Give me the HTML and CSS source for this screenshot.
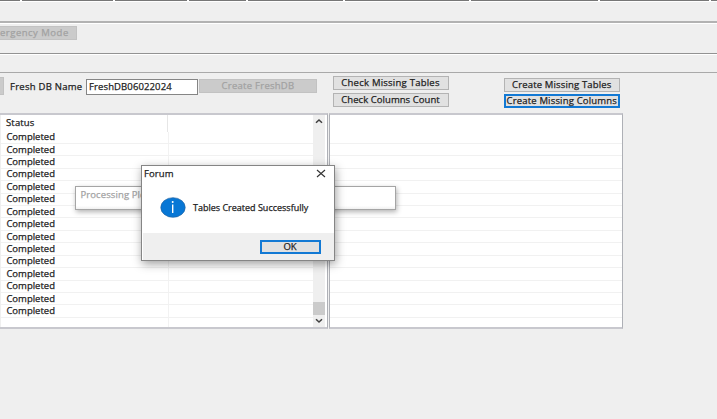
FILE: index.html
```
<!DOCTYPE html>
<html lang="en">
<head>
<meta charset="utf-8">
<title>Forum</title>
<link rel="stylesheet" href="styles.css">
</head>
<body>
<div class="window">
  <div class="tabs"><i></i><i></i><i></i><i></i><i></i><i></i><i></i><i></i><i></i></div>
  <div class="band band-menu"></div>
  <div class="band band-mode"><button class="btn disabled emergency"><span>ergency Mode</span></button></div>
  <div class="band band-empty"></div>
  <div class="toolbar">
    <button class="btn disabled stub"></button>
    <label class="name-label"><span>Fresh DB Name</span></label>
    <div class="field"><span>FreshDB06022024</span></div>
    <button class="btn disabled create-db"><span>Create FreshDB</span></button>
    <div class="stack checks">
      <button class="btn"><span class="t-ct">Check Missing Tables</span></button>
      <button class="btn"><span class="t-cc">Check Columns Count</span></button>
    </div>
    <div class="stack creates">
      <button class="btn"><span class="t-mt">Create Missing Tables</span></button>
      <button class="btn focused"><span class="t-mc">Create Missing Columns</span></button>
    </div>
  </div>
  <div class="panes">
    <div class="pane left">
      <div class="grid">
        <div class="head"><span>Status</span></div>
        <div class="rows">
          <div class="row"><span>Completed</span></div>
          <div class="row"><span>Completed</span></div>
          <div class="row"><span>Completed</span></div>
          <div class="row"><span>Completed</span></div>
          <div class="row"><span>Completed</span></div>
          <div class="row"><span>Completed</span></div>
          <div class="row"><span>Completed</span></div>
          <div class="row"><span>Completed</span></div>
          <div class="row"><span>Completed</span></div>
          <div class="row"><span>Completed</span></div>
          <div class="row"><span>Completed</span></div>
          <div class="row"><span>Completed</span></div>
          <div class="row"><span>Completed</span></div>
          <div class="row"><span>Completed</span></div>
          <div class="row"><span>Completed</span></div>
          <div class="row last"></div>
        </div>
      </div>
      <div class="scroll">
        <svg width="12" height="14" viewBox="0 0 12 14"><path d="M3 7.800 6 5l3 2.800"/></svg>
        <div class="thumb"></div>
        <svg width="12" height="12" viewBox="0 0 12 12"><path d="M3 4.200 6 7l3-2.800"/></svg>
      </div>
    </div>
    <div class="pane right">
      <div class="head"></div>
      <div class="rows">
        <div class="row"></div><div class="row"></div><div class="row"></div><div class="row"></div>
        <div class="row"></div><div class="row"></div><div class="row"></div><div class="row"></div>
        <div class="row"></div><div class="row"></div><div class="row"></div><div class="row"></div>
        <div class="row"></div><div class="row"></div><div class="row"></div><div class="row last"></div>
      </div>
    </div>
  </div>
</div>
<div class="processing"><span>Processing Please wait</span></div>
<div class="dialog">
  <div class="title"><span>Forum</span>
    <svg width="10" height="9" viewBox="0 0 10 9"><path d="M1 1l8 7M9 1 1 8"/></svg>
  </div>
  <div class="message">
    <svg width="26" height="21" viewBox="0 0 26 21"><ellipse cx="13" cy="10.500" rx="12.200" ry="9.800"/><path d="M12.700 7.500v8.500"/><circle cx="12.700" cy="4.900" r="1"/></svg>
    <span>Tables Created Successfully</span>
  </div>
  <div class="actions"><button class="btn focused"><span>OK</span></button></div>
</div>
</body>
</html>
```
FILE: styles.css
```
* { box-sizing: border-box; }
body {
  margin: 0;
  width: 717px;
  height: 419px;
  overflow: hidden;
  position: relative;
  background: #efefef;
  color: #222;
  font: 400 9.5px/12px "Open Sans", "Noto Sans", sans-serif;
}
span { display: inline-block; white-space: nowrap; -webkit-text-stroke: .25px currentColor; }
.tabs {
  display: grid;
  grid-template-columns: 20px 91px 72px 57px 95px 124px 127px 109px 1fr;
  gap: 2px;
  height: 2px;
  border-bottom: 1px solid #fff;
  background: #fff;
}
.tabs i { background: #777; }
.band { border-bottom: 1px solid #fff; }
.band-menu { height: 22px; box-shadow: inset 0 -2px #b2b2b2; }
.band-mode { height: 31px; padding-top: 2px; box-shadow: inset 0 -1px #929292; }
.band-empty { height: 18px; border-bottom: 0; box-shadow: inset 0 -1px #a9a9a9; }
.btn {
  display: flex;
  align-items: center;
  justify-content: center;
  height: 14px;
  padding: 0;
  border: 1px solid #b3b3b3;
  background: #e1e1e1;
  color: #222;
  font: inherit;
}
.btn.disabled { border-color: #c2c2c2; background: #cbcbcb; color: #a2a2a2; }
.btn.focused { border: 2px solid #1279d4; }
.emergency { width: 77px; justify-content: flex-start; border-left: 0; }
.emergency span { letter-spacing: .5px; }
.toolbar { display: flex; height: 40px; align-items: flex-start; }
.stub { width: 4px; height: 18px; margin-top: 4px; border-left: 0; }
.name-label { width: 82px; padding: 8px 0 0 6px; }
.name-label span { letter-spacing: .26px; }
.field {
  width: 112px;
  height: 16px;
  margin-top: 6px;
  padding: 1px 2px;
  border: 1px solid #858585;
  background: #fff;
}
.field span { letter-spacing: .12px; }
.create-db { width: 118px; margin: 6px 0 0 1px; }
.create-db span { letter-spacing: .26px; }
.stack { display: flex; flex-direction: column; gap: 3px; }
.checks { width: 116px; margin: 3px 0 0 15.5px; }
.creates { width: 116.5px; margin: 5px 0 0 55px; gap: 2px; }
.t-ct { letter-spacing: .24px; }
.t-cc { letter-spacing: .06px; }
.t-mt { letter-spacing: .16px; }
.t-mc { letter-spacing: .18px; }
.panes { display: flex; gap: 1px; height: 215.5px; }
.pane {
  border: 1px solid #aeb0b6;
  border-top: 2px solid #c8c8ce;
  border-bottom: 2px solid #c8c8ce;
  background: #fff;
  overflow: hidden;
}
.left { display: flex; width: 328px; border-left: 0; }
.right { width: 294px; }
.grid { width: 313px; border-left: 1px solid #efefef; }
.head { height: 16.5px; }
.grid .head { width: 167px; padding: 2px 0 0 5px; border-right: 1px solid #e6e6e6; }
.head span { letter-spacing: .15px; }
.row { height: 12.430px; border-bottom: 1px solid #f1f1f1; }
.row.last { border-bottom: 0; height: 11px; }
.grid .row { display: flex; align-items: center; padding-left: 5.4px; background: linear-gradient(#f2f2f2, #f2f2f2) 167px 0 / 1px 100% no-repeat; }
.scroll { display: flex; flex-direction: column; width: 12px; margin-left: 0; background: #efefef; }
.scroll svg { fill: none; stroke: #404040; stroke-width: 1.500; flex: none; }
.thumb { height: 13px; margin-top: auto; background: #cbcbcb; }
.processing {
  position: absolute;
  left: 75px;
  top: 186px;
  width: 321px;
  height: 24px;
  padding: 2px 4.500px;
  border: 1px solid #a5a5a5;
  background: linear-gradient(#fff 85%, #f0f0f0);
  box-shadow: 1px 2px 5px rgba(0, 0, 0, .3);
  color: #a3a3a3;
}
.processing span { letter-spacing: .1px; }
.dialog {
  position: absolute;
  left: 141px;
  top: 165px;
  width: 193.500px;
  height: 96px;
  border: 1px solid #858585;
  background: #fff;
  box-shadow: 1px 3px 9px rgba(0, 0, 0, .38);
  display: flex;
  flex-direction: column;
}
.title { display: flex; justify-content: space-between; height: 17px; padding: 2px 8px 0 2px; }
.title span { letter-spacing: .1px; }
.title svg { margin-top: 1px; fill: none; stroke: #333; stroke-width: 1.100; }
.message { display: flex; flex: 1; align-items: center; gap: 7px; padding: 0 0 1px 18px; }
.message span { font-size: 9px; letter-spacing: 0; }
.message ellipse { fill: #0877d5; stroke: #2466a3; stroke-width: .700; }
.message path { stroke: #fff; stroke-width: 1.400; }
.message circle { fill: #fff; }
.actions { height: 27px; margin-left: 1px; padding: 7px 13px 0 0; background: #efefef; }
.actions .btn { width: 61px; margin-left: auto; }
```
